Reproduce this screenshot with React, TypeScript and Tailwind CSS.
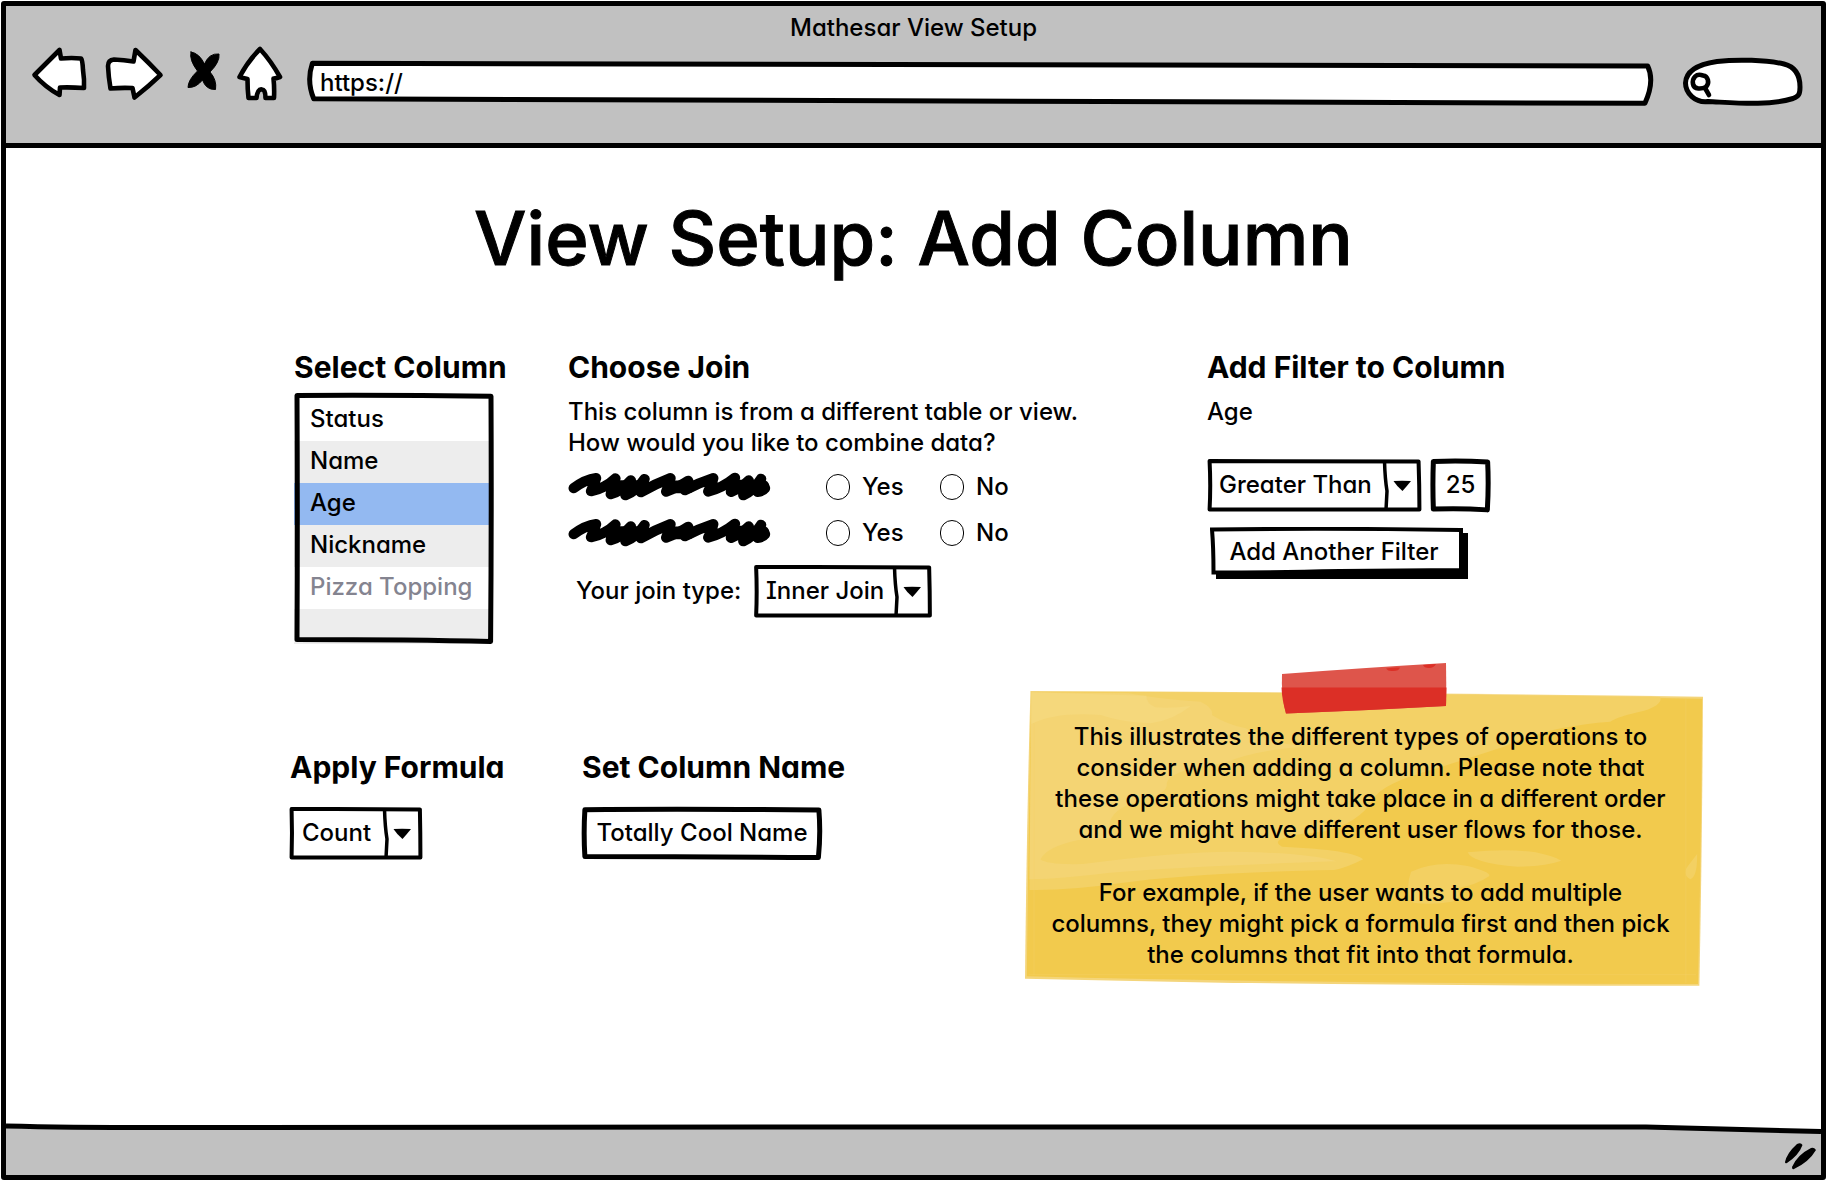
import React from "react";

/* Hand-drawn outline that stretches with the control it surrounds. */
function SketchFrame({ d, fill = "none", stroke = 5 }: { d: string; fill?: string; stroke?: number }) {
  return (
    <svg
      aria-hidden="true"
      viewBox="0 0 100 100"
      preserveAspectRatio="none"
      className="pointer-events-none absolute inset-0 h-full w-full overflow-visible"
    >
      <path
        d={d}
        fill={fill}
        stroke="#000"
        strokeWidth={stroke}
        strokeLinejoin="round"
        strokeLinecap="round"
        vectorEffect="non-scaling-stroke"
      />
    </svg>
  );
}

function NavIcon({ box, className, label, children }: { box: string; className: string; label: string; children: React.ReactNode }) {
  return (
    <button type="button" aria-label={label} className={className}>
      <svg viewBox={box} className="block h-full w-full overflow-visible" fill="#fff" stroke="#000" strokeWidth="4.6" strokeLinejoin="round" strokeLinecap="round">
        {children}
      </svg>
    </button>
  );
}

function BrowserHeader() {
  return (
    <header className="h-[142px] border-b-[5px] border-black bg-[#c1c1c1] pt-1.5">
      <p className="text-center">Mathesar View Setup</p>
      <nav className="mt-[3px] flex items-start pr-[18px] pl-[25px]">
        <NavIcon box="31 46 56 54" className="h-[54px] w-[56px]" label="Back">
          <path d="M34.500 75 L59.500 50 L61 58.500 Q72 57.500 81 58.500 Q82.500 60 83 70 Q84.500 80 84 88 Q70 87 60 87.500 L59.500 95 Q45 87 34.500 75Z" />
        </NavIcon>
        <NavIcon box="105 46 60 54" className="ml-[18px] h-[54px] w-[60px]" label="Forward">
          <path d="M108 66 Q108 60 114 59.500 Q124 60 133.500 61.500 L135.500 50 Q148 62 160.500 75 Q149 86 134.500 97.500 L132.500 88 Q121 87.500 110.500 88.500 Q108.500 77 108 66Z" />
        </NavIcon>
        <NavIcon box="187 46 34 54" className="ml-[22px] h-[54px] w-[34px]" label="Stop">
          <path
            d="M191 52 Q199 53 204.500 64 Q209 53 219 54 Q220 62 210 72 Q217 80 215.500 89.500 Q206 90 202.500 80 Q196 88 188 87.500 Q188 80 197.500 71 Q189 60 191 52Z"
            fill="#000"
            strokeWidth="1"
          />
        </NavIcon>
        <NavIcon box="237 46 46 54" className="ml-[16px] h-[54px] w-[46px]" label="Home">
          <path d="M260 49 Q271 61 280 77 Q276 78.500 273.500 78.500 Q274.500 88 274 98 L265.500 98 Q265.500 89.500 262 89.500 Q257.500 88.500 256.500 98 L248.500 98 Q247.500 90 247.500 79 Q243 78 239.500 77 Q248 61 260 49Z" />
        </NavIcon>
        <div className="relative mt-[15px] ml-[24px] h-[45px] flex-1">
          <SketchFrame fill="#fff" d="M0.4 5 Q50 5 99.600 11 Q100.150 45 99.400 94 Q50 95 0.5 84 Q-0.050 45 0.4 5Z" />
          <input
            aria-label="Address"
            defaultValue="https://"
            className="relative h-[42px] w-full bg-transparent px-[13px] text-black outline-none"
          />
        </div>
        <div className="relative mt-[11px] ml-[30px] h-[50px] w-[120px]">
          <svg aria-hidden="true" viewBox="0 0 120 50" className="absolute inset-0 h-full w-full overflow-visible" fill="#fff" stroke="#000" strokeWidth="5" strokeLinecap="round" strokeLinejoin="round">
            <path d="M25 44.500 C12 46 2.500 36 2.500 26 C3 13 17 7 34 4.500 C55 2 83 3 101 7 C113 10 117 19 117 30 C117 37 116 39 110 41.500 C85 49 55 46 25 44.500Z" />
            <path d="M20 18.500 C13 16 9 21 10 27 C11 33 19 32 23 30 C27 26 25 19 20 18.500Z" strokeWidth="4.6" />
            <path d="M22 31 L26 38" strokeWidth="4.6" />
          </svg>
          <input type="search" aria-label="Search" className="relative ml-8 h-[46px] w-[76px] bg-transparent outline-none" />
        </div>
      </nav>
    </header>
  );
}

const boxPath = "M1.200 4 Q50 3.500 98.400 4.500 Q98.800 50 98.800 95.500 Q50 95 1.200 95.500 Q1.800 50 1.200 4Z";

function SelectBox({ value, label, id, className }: { value: string; label?: string; id?: string; className: string }) {
  return (
    <div className={className}>
      <SketchFrame stroke={4} d={boxPath} />
      <svg aria-hidden="true" viewBox="0 0 40 53" className="pointer-events-none absolute top-0 right-0 h-[53px] w-[40px]">
        <path d="M2.500 2 Q3 20 5 32 Q4.500 42 4 51" fill="none" stroke="#000" strokeWidth="3.500" />
        <path d="M11.500 22 Q20 21.500 29 22 Q25 27 20.500 32 Q15 27.500 11.500 22Z" />
      </svg>
      <select id={id} aria-label={label} defaultValue={value} className="relative h-[53px] w-full appearance-none bg-transparent pb-0.5 pl-3 outline-none">
        <option>{value}</option>
      </select>
    </div>
  );
}

function Heading({ children }: { children: React.ReactNode }) {
  return <h2 className="text-[30px] leading-[36px] font-bold whitespace-nowrap">{children}</h2>;
}

function ColumnList() {
  const row = "h-[42px] pl-4 leading-[40px]";
  return (
    <div className="relative mt-2 w-[200px] pt-[6px]">
      <ul role="listbox" aria-label="Columns" className="pr-0.5">
        <li role="option" aria-selected="false" className={row}>Status</li>
        <li role="option" aria-selected="false" className={row + " bg-[#ededed]"}>Name</li>
        <li role="option" aria-selected="true" className={row + " bg-[#93b9f1]"}>Age</li>
        <li role="option" aria-selected="false" className={row + " bg-[#ededed]"}>Nickname</li>
        <li role="option" aria-selected="false" aria-disabled="true" className={row + " text-[#848490]"}>Pizza Topping</li>
        <li role="presentation" className="h-[35px] bg-[#ededed]" />
      </ul>
      <SketchFrame d="M1.500 1 Q50 0.800 98.500 1.300 Q98.800 50 98.300 99 Q60 98.200 1.500 98.200 Q1.800 50 1.500 1Z" />
    </div>
  );
}

function Scribble() {
  return (
    <svg role="img" aria-label="Hidden column name" viewBox="38 50 608 86" className="h-[29px] w-[203px]" fill="none" stroke="#000" strokeWidth="31" strokeLinecap="round" strokeLinejoin="round">
      <path d="M55 98 Q90 72 122 68 Q115 90 107 107 Q150 98 180 69 Q170 95 166 116 Q200 105 226 75 Q212 100 210 119 Q245 105 267 71 Q255 95 256 110 Q300 85 345 68 Q342 88 332 108 Q370 95 398 76 Q388 90 388 104 Q430 82 473 68 Q470 88 458 108 Q500 98 538 67 Q528 90 526 109 Q560 95 579 75 Q564 100 563 119 Q595 105 616 70 Q605 95 606 109 Q620 108 628 98" />
      <path d="M175 93 H262 M360 94 H400 M525 92 H622" strokeWidth="38" />
    </svg>
  );
}

function JoinQuestion({ name }: { name: string }) {
  const radio = "h-[26px] w-6 shrink-0 appearance-none rounded-full border border-black bg-white checked:bg-black";
  return (
    <fieldset className="flex h-[31px] items-center">
      <Scribble />
      <label className="ml-[55px] flex w-[114px] items-center gap-3">
        <input type="radio" name={name} value="yes" className={radio} />
        Yes
      </label>
      <label className="flex items-center gap-3">
        <input type="radio" name={name} value="no" className={radio} />
        No
      </label>
    </fieldset>
  );
}

function StickyNote() {
  return (
    <aside className="relative h-[295px] pt-[30px] pr-[7px] text-center whitespace-nowrap">
      <svg aria-hidden="true" viewBox="32 123 1498 885" preserveAspectRatio="none" className="absolute inset-0 h-full w-full">
        <path d="M44 123 Q800 126 1530 140 Q1528 600 1522 1007 Q700 1008 32 986 Q36 500 44 123Z" fill="#f4d57a" />
        <path d="M46 126 Q800 130 1528 146 Q1526 600 1519 1002 Q700 1002 36 979 Q40 500 46 126Z" fill="#f2ca4d" />
        <path d="M46 127 Q700 128 1436 142 Q1440 165 1400 182 Q1340 200 1325 215 Q1180 230 1090 290 Q1000 330 930 360 Q820 400 800 450 Q770 520 690 545 Q560 560 600 590 Q760 600 779 628 Q740 655 715 660 Q400 668 240 700 Q130 722 42 720Z" fill="#f3d166" />
        <path d="M46 127 L260 130 Q330 148 420 155 Q450 175 445 195 Q480 225 520 235 Q560 275 650 290 Q540 300 470 340 Q350 360 345 400 Q350 430 290 450 Q210 480 220 540 Q260 570 150 570 Q80 590 66 628 Q80 645 160 642 Q400 600 520 606 Q660 610 720 634 Q400 648 220 668 Q120 685 42 688Z" fill="#f4d473" />
        <path d="M46 127 L300 137 Q300 160 320 172 Q360 175 398 168 Q360 210 310 220 Q240 215 200 195 Q100 185 46 222Z" fill="#f5d87c" />
        <path d="M1010 607 Q1100 595 1160 607 Q1200 618 1217 632 Q1180 650 1120 650 Q1020 640 1010 607Z M1517 612 Q1518 680 1502 688 Q1488 680 1493 655Z M885 665 Q940 630 1010 648 Q1060 665 1058 678 Q1030 705 985 715 Q1000 745 975 755 Q930 765 890 758 Q870 720 885 665Z" fill="#f3d062" />
        <path d="M1492 146 V1000 M52 220 V975 M40 974 H1515" stroke="#f4d067" strokeWidth="1" fill="none" />
      </svg>
      <svg aria-hidden="true" viewBox="0 0 166 52" className="absolute -top-[29px] left-[38%] -ml-0.5 h-[52px] w-[166px]">
        <path d="M1 12 Q80 6 165 1 Q165.500 22 165 44 Q90 48 5 51.500 Q0 33 1 12Z" fill="#de554b" />
        <path d="M0.500 25.500 H165.500 L165 44 Q90 48 5 51.500 Q1 38 0.500 25.500Z" fill="#dc2f26" />
        <path d="M105 6.500 Q113 5 119 5.500 Q118 9 112 9 Q107 9.500 105 6.500Z M142 3 L155 2 Q153 6 148 6 Q143 6 142 3Z" fill="#dc2f26" />
      </svg>
      <p className="relative">
        This illustrates the different types of operations to
        <br />
        consider when adding a column. Please note that
        <br />
        these operations might take place in a different order
        <br />
        and we might have different user flows for those.
      </p>
      <p className="relative mt-8">
        For example, if the user wants to add multiple
        <br />
        columns, they might pick a formula first and then pick
        <br />
        the columns that fit into that formula.
      </p>
    </aside>
  );
}

function StatusBar() {
  return (
    <footer className="relative h-[50px]">
      <svg aria-hidden="true" viewBox="0 0 1815 50" preserveAspectRatio="none" className="absolute inset-0 h-full w-full overflow-visible">
        <path d="M0 1 Q60 2.500 150 2.500 L900 2 Q1500 1.500 1640 2 Q1720 4 1815 6.500 V50 H0Z" fill="#c1c1c1" />
        <path d="M0 1 Q60 2.500 150 2.500 L900 2 Q1500 1.500 1640 2 Q1720 4 1815 6.500" fill="none" stroke="#000" strokeWidth="5" />
      </svg>
      <svg aria-hidden="true" viewBox="0 0 32 28" className="absolute right-[5px] bottom-[5px] h-[28px] w-[32px]">
        <path d="M1 20 Q3 11 13 2 Q17 0 18.500 3 Q15 13 3 21 Q1 22 1 20Z M8 25 Q13 13 27 6 Q30 5 32 8 Q25 20 10 27 Q8 28 8 25Z" />
      </svg>
    </footer>
  );
}

export default function App() {
  return (
    <div
      style={{ fontFeatureSettings: '"cv11", "cv08"' }}
      className="flex min-h-screen flex-col bg-white pt-px pr-0.5 pb-0.5 pl-px font-['Inter','Liberation_Sans',sans-serif] text-[24px] leading-[31px] font-medium text-black"
    >
      <div className="flex flex-1 flex-col rounded-[3px] border-[5px] border-black">
        <BrowserHeader />
        <main className="flex-1 pt-[46px]">
          <h1 className="text-center text-[74px] leading-[88px] whitespace-nowrap [-webkit-text-stroke:1px_black]">View Setup: Add Column</h1>

          <div className="mt-[67px] grid grid-cols-[274fr_639fr_614fr] pl-[288px]">
            <section>
              <Heading>Select Column</Heading>
              <ColumnList />
            </section>

            <section>
              <Heading>Choose Join</Heading>
              <p className="mt-[11px]">
                This column is from a different table or view.
                <br />
                How would you like to combine data?
              </p>
              <div className="mt-[13px] flex flex-col gap-[15px]">
                <JoinQuestion name="join-first" />
                <JoinQuestion name="join-second" />
              </div>
              <div className="mt-[17px] flex items-center pl-2">
                <label htmlFor="join-type" className="w-[178px] pb-0.5">Your join type:</label>
                <SelectBox id="join-type" value="Inner Join" className="relative w-[178px]" />
              </div>
            </section>

            <section>
              <Heading>Add Filter to Column</Heading>
              <p className="mt-[11px]">Age</p>
              <div className="mt-[32px] flex gap-[9px]">
                <SelectBox label="Condition" value="Greater Than" className="relative w-[215px]" />
                <div className="relative h-[53px] w-[59px]">
                  <SketchFrame d="M4 4.500 Q50 2.500 96 5.500 Q98 50 95.500 96 Q50 92.500 4 94.500 Q2.500 50 4 4.500Z" />
                  <input aria-label="Filter value" defaultValue="25" className="relative h-full w-full bg-transparent pb-0.5 text-center outline-none" />
                </div>
              </div>
              <button type="button" className="relative mt-[15px] ml-[3px] block h-[52px] w-[258px]">
                <svg aria-hidden="true" viewBox="0 0 258 52" preserveAspectRatio="none" className="absolute inset-0 h-full w-full">
                  <path d="M6 6 H258 V52 H6Z" />
                  <path d="M2 2.500 Q120 1 251 3 V43 Q180 43.500 130 44 Q60 45.500 3.500 45.500 Q3.500 20 2 2.500Z" fill="#fff" stroke="#000" strokeWidth="4" />
                </svg>
                <span className="relative block pr-2.5 pb-1">Add Another Filter</span>
              </button>
            </section>
          </div>

          <div className="mt-[47px] grid grid-cols-[292fr_443fr_678fr] pr-[118px] pl-[284px]">
            <section className="pt-[58px]">
              <Heading>Apply Formula</Heading>
              <SelectBox label="Formula" value="Count" className="relative mt-[22px] w-[132px]" />
            </section>
            <section className="pt-[58px]">
              <Heading>Set Column Name</Heading>
              <div className="relative mt-[22px] h-[53px] w-[240px]">
                <SketchFrame d="M1.200 5 Q40 3 98.700 5.500 Q99.500 50 98.500 95.500 Q50 93.500 1.200 93.500 Q0.600 50 1.200 5Z" />
                <input aria-label="Column name" defaultValue="Totally Cool Name" className="relative h-full w-full bg-transparent pb-0.5 text-center outline-none" />
              </div>
            </section>
            <StickyNote />
          </div>
        </main>
        <StatusBar />
      </div>
    </div>
  );
}
